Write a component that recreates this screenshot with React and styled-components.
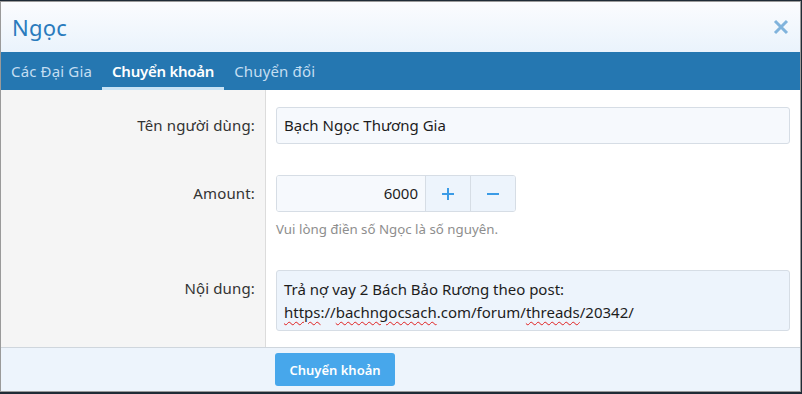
import styled, { createGlobalStyle } from "styled-components";

const GlobalStyle = createGlobalStyle`
  html, body {
    margin: 0;
    padding: 0;
    background: #1f2b36;
  }
  body {
    padding-top: 1px;
    font-family: "Noto Sans", "Open Sans", sans-serif;
  }
`;

const Dialog = styled.div`
  width: 799px;
  height: 389px;
  border: 1px solid #9a9a9a;
  background: #fff;
  display: flex;
  flex-direction: column;
  overflow: hidden;
`;

const TitleBar = styled.div`
  height: 50px;
  display: flex;
  align-items: center;
  justify-content: space-between;
  padding: 0 10px 0 11px;
  background: linear-gradient(to bottom, #fbfcfe, #eaf3fc);
  flex-shrink: 0;
`;

const Title = styled.h1`
  margin: 0;
  font-size: 22px;
  font-weight: 400;
  letter-spacing: 0.2px;
  color: #2a7bbd;
`;

const CloseBtn = styled.button`
  border: 0;
  background: none;
  padding: 0;
  width: 18px;
  height: 18px;
  display: flex;
  align-items: center;
  justify-content: center;
  cursor: pointer;
`;

const TabBar = styled.div`
  height: 38px;
  display: flex;
  background: #2577b1;
  flex-shrink: 0;
`;

const Tab = styled.div`
  padding: 3px 10px 0;
  display: flex;
  align-items: center;
  font-size: 15px;
  letter-spacing: ${(p) => (p.$active ? "-0.25px" : "0.15px")};
  color: ${(p) => (p.$active ? "#ffffff" : "#c4def2")};
  font-weight: ${(p) => (p.$active ? 600 : 400)};
  border-bottom: 3px solid ${(p) => (p.$active ? "#c8e2f5" : "transparent")};
  cursor: pointer;
`;

const Form = styled.div`
  display: grid;
  grid-template-columns: 265px 1fr;
  flex: 1;
`;

const LabelCell = styled.div`
  background: #f5f5f5;
  border-right: 1px solid #dcdcdc;
  padding: 17px 10px ${(p) => p.$bottom || 14}px 0;
  text-align: right;
  font-size: 15px;
  letter-spacing: 0.15px;
  line-height: 37px;
  color: #333;
`;

const ControlCell = styled.div`
  padding: 17px 10px ${(p) => p.$bottom || 14}px 10px;
`;

const TextInput = styled.div`
  height: 35px;
  border: 1px solid #d6dde5;
  border-radius: 3px;
  background: #f6f9fd;
  padding: 0 7px;
  font-size: 15px;
  line-height: 35px;
  color: #1d1d1d;
`;

const SpinBox = styled.div`
  display: flex;
  width: 238px;
  height: 35px;
  border: 1px solid #d6dde5;
  border-radius: 3px;
  overflow: hidden;
`;

const SpinValue = styled.div`
  flex: 1;
  background: #f6f9fd;
  text-align: right;
  padding: 0 7px;
  font-size: 15px;
  line-height: 35px;
  color: #1d1d1d;
`;

const SpinButton = styled.div`
  width: 44px;
  border-left: 1px solid #d6dde5;
  background: #edf4fc;
  display: flex;
  align-items: center;
  justify-content: center;
`;

const Hint = styled.div`
  margin-top: 7px;
  font-size: 13.3px;
  line-height: 20px;
  color: #8e8e8e;
`;

const TextArea = styled.div`
  height: 45px;
  border: 1px solid #d6dde5;
  border-radius: 3px;
  background: #edf4fc;
  padding: 7px;
  font-size: 15px;
  line-height: 23px;
  color: #1d1d1d;
`;

const Misspelled = styled.span`
  text-decoration: underline wavy #e02020;
  text-decoration-thickness: 1px;
  text-underline-offset: 3px;
`;

const Footer = styled.div`
  height: 43px;
  border-top: 1px solid #cfd6dd;
  background: #edf4fc;
  display: flex;
  align-items: center;
  padding-left: 274px;
  flex-shrink: 0;
`;

const SubmitButton = styled.button`
  width: 120px;
  height: 33px;
  border: 0;
  border-radius: 3px;
  background: #47a7eb;
  color: #fff;
  font-family: inherit;
  font-size: 13px;
  font-weight: 600;
  cursor: pointer;
`;

const tabs = ["Các Đại Gia", "Chuyển khoản", "Chuyển đổi"];

export default function App() {
  return (
    <>
      <GlobalStyle />
      <Dialog>
        <TitleBar>
          <Title>Ngọc</Title>
          <CloseBtn aria-label="close">
            <svg width="16" height="16" viewBox="0 0 16 16">
              <path d="M2 2L14 14M14 2L2 14" stroke="#80b3dc" strokeWidth="3" />
            </svg>
          </CloseBtn>
        </TitleBar>
        <TabBar>
          {tabs.map((t) => (
            <Tab key={t} $active={t === "Chuyển khoản"}>
              {t}
            </Tab>
          ))}
        </TabBar>
        <Form>
          <LabelCell>Tên người dùng:</LabelCell>
          <ControlCell>
            <TextInput>Bạch Ngọc Thương Gia</TextInput>
          </ControlCell>

          <LabelCell>Amount:</LabelCell>
          <ControlCell>
            <SpinBox>
              <SpinValue>6000</SpinValue>
              <SpinButton>
                <svg width="14" height="14" viewBox="0 0 14 14">
                  <path d="M7 1V13M1 7H13" stroke="#3b9be6" strokeWidth="2" />
                </svg>
              </SpinButton>
              <SpinButton>
                <svg width="14" height="14" viewBox="0 0 14 14">
                  <path d="M1 7H13" stroke="#3b9be6" strokeWidth="2" />
                </svg>
              </SpinButton>
            </SpinBox>
            <Hint>Vui lòng điền số Ngọc là số nguyên.</Hint>
          </ControlCell>

          <LabelCell $bottom={16}>Nội dung:</LabelCell>
          <ControlCell $bottom={16}>
            <TextArea>
              Trả nợ vay 2 Bách Bảo Rương theo post:
              <br />
              <Misspelled>https</Misspelled>://<Misspelled>bachngocsach</Misspelled>.com/forum/
              <Misspelled>threads</Misspelled>/20342/
            </TextArea>
          </ControlCell>
        </Form>
        <Footer>
          <SubmitButton>Chuyển khoản</SubmitButton>
        </Footer>
      </Dialog>
    </>
  );
}
